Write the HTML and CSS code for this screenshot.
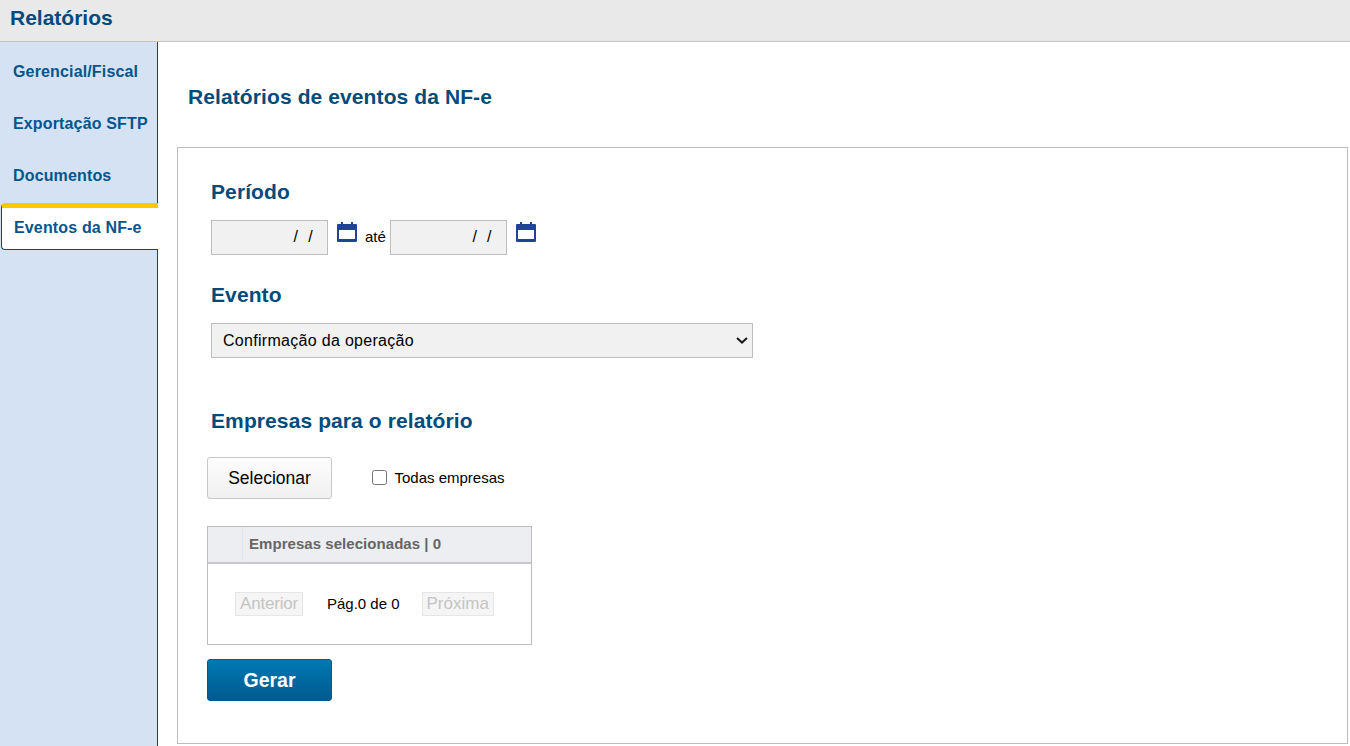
FILE: index.html
```html
<!DOCTYPE html>
<html lang="pt-BR">
<head>
<meta charset="utf-8">
<title>Relatórios</title>
<link rel="stylesheet" href="styles.css">
</head>
<body>
<header class="topbar"><h1 class="topbar-title">Relatórios</h1></header>
<div class="layout">
  <nav class="sidebar">
    <a class="nav-item">Gerencial/Fiscal</a>
    <a class="nav-item">Exportação SFTP</a>
    <a class="nav-item">Documentos</a>
    <a class="nav-item nav-active">Eventos da NF-e</a>
  </nav>
  <main class="content">
    <h2 class="page-title">Relatórios de eventos da NF-e</h2>
    <section class="card">
      <h3 class="section-title title-period">Período</h3>
      <div class="date-row">
        <div class="date-input"><span class="date-mask">/&nbsp;&nbsp;/</span></div>
        <svg class="cal" viewBox="0 0 20 20" aria-hidden="true"><path fill="#1f4496" d="M1 2h3V0h2v2h8V0h2v2h3a1 1 0 0 1 1 1v16a1 1 0 0 1-1 1H1a1 1 0 0 1-1-1V3a1 1 0 0 1 1-1z"/><rect x="2" y="8" width="16" height="9" fill="#fff"/></svg>
        <span class="ate">até</span>
        <div class="date-input"><span class="date-mask">/&nbsp;&nbsp;/</span></div>
        <svg class="cal" viewBox="0 0 20 20" aria-hidden="true"><path fill="#1f4496" d="M1 2h3V0h2v2h8V0h2v2h3a1 1 0 0 1 1 1v16a1 1 0 0 1-1 1H1a1 1 0 0 1-1-1V3a1 1 0 0 1 1-1z"/><rect x="2" y="8" width="16" height="9" fill="#fff"/></svg>
      </div>
      <h3 class="section-title title-event">Evento</h3>
      <div class="select-wrap">
        <select class="event-select"><option>Confirmação da operação</option></select>
        <svg class="chevron" viewBox="0 0 12 7" aria-hidden="true"><path d="M1 1l5 4.6L11 1" fill="none" stroke="#1a1a1a" stroke-width="2"/></svg>
      </div>
      <h3 class="section-title title-companies">Empresas para o relatório</h3>
      <div class="select-row">
        <button class="btn-select" type="button">Selecionar</button>
        <label class="check-label"><input class="check" type="checkbox">Todas empresas</label>
      </div>
      <div class="table-box">
        <div class="table-head"><div class="head-cell"></div><div class="head-text">Empresas selecionadas | 0</div></div>
        <div class="pager">
          <span class="pager-btn pager-prev">Anterior</span>
          <span class="pager-text">Pág.0 de 0</span>
          <span class="pager-btn">Próxima</span>
        </div>
      </div>
      <button class="btn-generate" type="button">Gerar</button>
    </section>
  </main>
</div>
</body>
</html>
```
FILE: styles.css
```css
* { box-sizing: border-box; }
html, body { margin: 0; height: 746px; overflow: hidden; }
body { font-family: "Liberation Sans", Arial, sans-serif; background: #fff; color: #000; }
h1, h2, h3 { margin: 0; }
.topbar { height: 42px; background: #e9e9e9; border-bottom: 1px solid #c4c4c4; padding: 0 10px; display: flex; align-items: center; }
.topbar-title { font-size: 21px; line-height: 34px; color: #004b7c; font-weight: bold; margin-top: -6px; }
.layout { display: flex; height: 704px; }
.sidebar { width: 158px; flex: none; background: #d5e2f4; border-right: 1px solid #004b7c; padding-top: 4px; display: flex; flex-direction: column; }
.nav-item { height: 52px; padding-left: 13px; display: flex; align-items: center; font-size: 16px; font-weight: bold; color: #00568c; letter-spacing: 0.15px; }
.nav-active { height: 47px; margin: 1px -1px 0 1px; padding: 0 0 2px 12px; background: #fff; border: 1px solid #004b7c; border-top: 5px solid #ffc800; border-right: 0; border-radius: 4px 0 0 4px; position: relative; }
.content { flex: 1; padding: 0 2px 0 19px; }
.page-title { font-size: 21px; line-height: 24px; color: #004b7c; font-weight: bold; margin: 43px 0 38px 11px; letter-spacing: 0.1px; }
.card { height: 597px; border: 1px solid #bdbdbd; padding: 32px 33px 0 29px; display: flex; flex-direction: column; align-items: flex-start; }
.section-title { font-size: 21px; line-height: 24px; color: #004b7c; font-weight: bold; margin-left: 4px; letter-spacing: 0.1px; }
.date-row { display: flex; align-items: flex-start; margin: 16px 0 0 4px; }
.date-input { width: 117px; height: 35px; background: #f1f1f1; border: 1px solid #bdbdbd; padding-right: 14px; display: flex; align-items: center; justify-content: flex-end; font-size: 16px; }
.date-mask { line-height: 30px; margin-top: -1px; letter-spacing: 0.4px; }
.cal { width: 20px; height: 20px; margin: 2px 9px 0 9px; flex: none; }
.ate { font-size: 15px; line-height: 20px; margin: 7px 4px 0 -1px; }
.title-event { margin-top: 28px; }
.select-wrap { position: relative; width: 542px; height: 35px; margin: 16px 0 0 4px; }
.event-select { appearance: none; display: block; width: 100%; height: 100%; background: #f1f1f1; border: 1px solid #bdbdbd; border-radius: 0; font: 16px "Liberation Sans", Arial, sans-serif; letter-spacing: 0.3px; color: #000; padding-left: 11px; }
.chevron { position: absolute; right: 5px; top: 14px; width: 12px; height: 7px; pointer-events: none; }
.title-companies { margin-top: 51px; }
.select-row { display: flex; align-items: center; margin-top: 24px; }
.btn-select { width: 125px; height: 42px; background: linear-gradient(#fdfdfd, #f0f0f0); border: 1px solid #c8c8c8; border-radius: 3px; font: 17.5px "Liberation Sans", Arial, sans-serif; color: #000; padding: 0; }
.check-label { display: flex; align-items: center; font-size: 15px; margin: -2px 0 0 40px; }
.check { width: 15px; height: 15px; margin: 0 7.5px 0 0; }
.table-box { width: 325px; height: 119px; margin-top: 27px; border: 1px solid #bdbdbd; }
.table-head { height: 37px; display: flex; background: #eceef2; border-bottom: 2px solid #c8c8c8; }
.head-cell { width: 35px; border-right: 1px solid #e4e6ea; }
.head-text { padding-left: 6px; font-size: 15px; line-height: 34px; font-weight: bold; color: #666; letter-spacing: 0.05px; }
.pager { display: flex; align-items: center; height: 80px; padding-left: 27px; font-size: 15px; }
.pager-btn { height: 24px; padding: 0 4px; background: #f5f5f5; border: 1px solid #e6e6e6; color: #c4c4c4; font-size: 17px; line-height: 22px; }
.pager-prev { letter-spacing: -0.2px; }
.pager-text { margin: -2px 22px 0 24px; }
.btn-generate { width: 125px; height: 42px; margin-top: 14px; background: linear-gradient(#0079b3, #005a8f); border: 1px solid #00598c; border-radius: 3px; color: #fff; font: bold 19.5px "Liberation Sans", Arial, sans-serif; padding: 0; }
```
